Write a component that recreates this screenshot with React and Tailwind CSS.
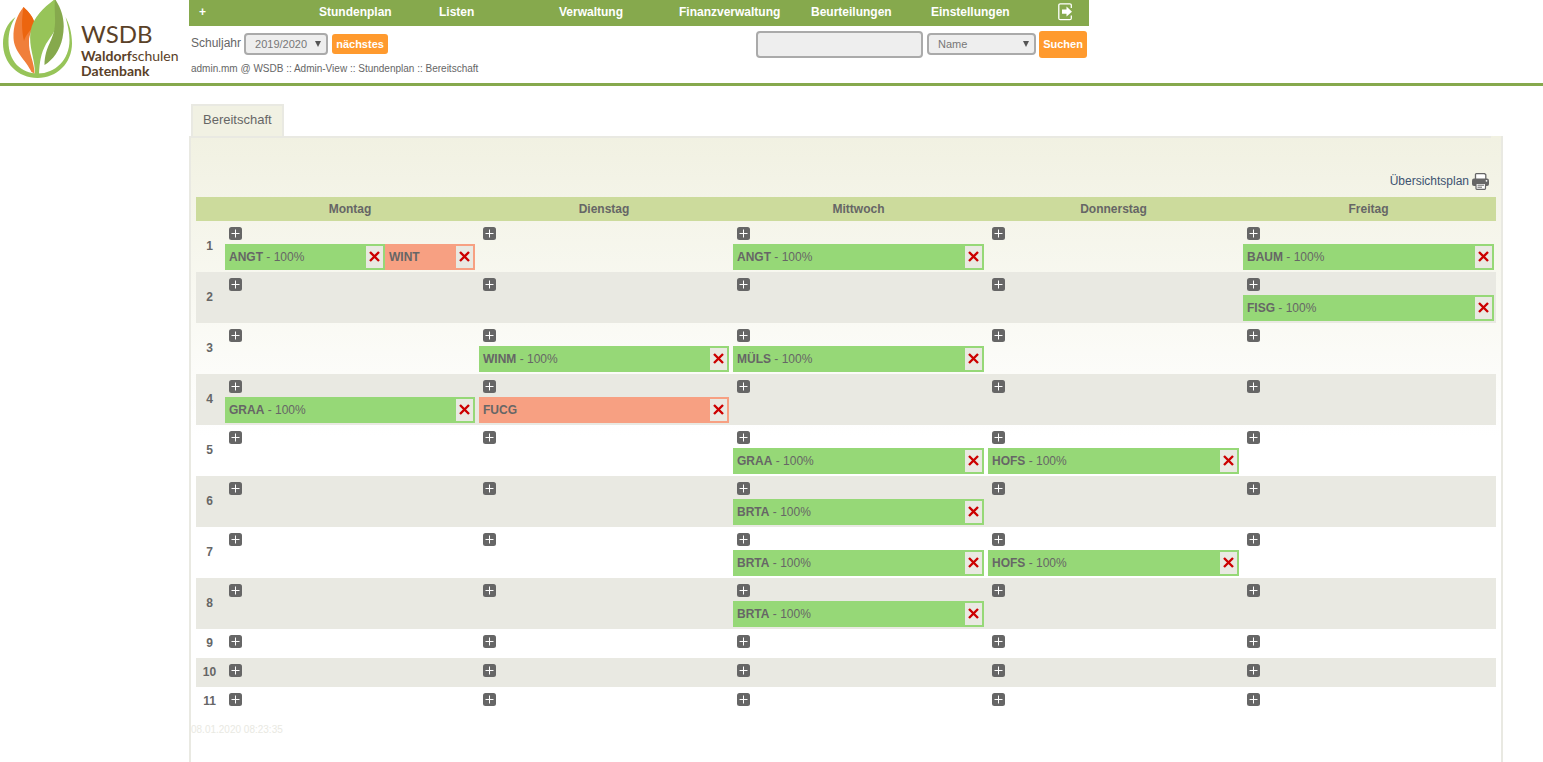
import { useState } from 'react';
import clsx from 'clsx';

const NAV_ITEMS = [
  { label: '+' },
  { label: 'Stundenplan' },
  { label: 'Listen' },
  { label: 'Verwaltung' },
  { label: 'Finanzverwaltung', wide: true },
  { label: 'Beurteilungen' },
  { label: 'Einstellungen' },
];

const DAYS = ['Montag', 'Dienstag', 'Mittwoch', 'Donnerstag', 'Freitag'];
const LESSONS = [1, 2, 3, 4, 5, 6, 7, 8, 9, 10, 11];

const INITIAL_ENTRIES = [
  { id: 1, day: 0, lesson: 1, teacher: 'ANGT', percent: 100, width: 64 },
  { id: 2, day: 0, lesson: 1, teacher: 'WINT', width: 36 },
  { id: 3, day: 2, lesson: 1, teacher: 'ANGT', percent: 100 },
  { id: 4, day: 4, lesson: 1, teacher: 'BAUM', percent: 100 },
  { id: 5, day: 4, lesson: 2, teacher: 'FISG', percent: 100 },
  { id: 6, day: 1, lesson: 3, teacher: 'WINM', percent: 100 },
  { id: 7, day: 2, lesson: 3, teacher: 'MÜLS', percent: 100 },
  { id: 8, day: 0, lesson: 4, teacher: 'GRAA', percent: 100 },
  { id: 9, day: 1, lesson: 4, teacher: 'FUCG' },
  { id: 10, day: 2, lesson: 5, teacher: 'GRAA', percent: 100 },
  { id: 11, day: 3, lesson: 5, teacher: 'HOFS', percent: 100 },
  { id: 12, day: 2, lesson: 6, teacher: 'BRTA', percent: 100 },
  { id: 13, day: 2, lesson: 7, teacher: 'BRTA', percent: 100 },
  { id: 14, day: 3, lesson: 7, teacher: 'HOFS', percent: 100 },
  { id: 15, day: 2, lesson: 8, teacher: 'BRTA', percent: 100 },
];

const Logo = () => (
  <a href="#" aria-label="WSDB" className="flex shrink-0 w-[189px] h-[83px] text-[#5a4128]">
    <svg viewBox="0 0 76 83" className="w-[76px] h-[83px] shrink-0">
      {/* Ring */}
      <path
        d="M15.500 17C7 23 3 33 3 43.500 3 63 18 78 37.500 78S72 63 72 43.500C72 33 69 23 65.500 17 67.500 24 69.500 32 69.500 40 69.500 60 55 73.500 38 73.500S8.500 61 8.500 42C8.500 32 11 24 15.500 17z"
        fill="#97c459"
      />
      {/* Orange leaf */}
      <path d="M23.500 7C17 15 13 26 13.500 38 14 52 26 60 31.500 72L34.500 73.500C34.500 62 28.500 54 29 41 29 35 32 30 35 24 33 17 29 12 23.500 7z" fill="#f07f3a" />
      <path d="M23.500 7C21.500 20 21.500 30 24 41 26 34 31 30 35 24 33 17 29 12 23.500 7z" fill="#ec650f" />
      {/* Green leaf */}
      <path d="M55 -1C45 7 33 16 30.500 32 28.500 48 35 58 35 74.500H39C39.500 62 41 53 46 44 51 36 56 31 56 24 56 16 57 8 55 -1z" fill="#97c459" />
      <path d="M55 -1C54 8 55.500 16 55 24 54 41 45 45 44.500 65 53 60 60 50 62.500 38 65.500 23 63 11 55 -1z" fill="#86a94d" />
    </svg>
    <span className="flex flex-col pl-[5px] pt-[19px] whitespace-nowrap font-['Lato',sans-serif]">
      <span className="text-[24px] leading-[29px]">WSDB</span>
      <span className="text-[14px] leading-[15px]">
        <b>Waldorf</b>schulen
      </span>
      <b className="text-[14px] leading-[15px]">Datenbank</b>
    </span>
  </a>
);

const LogoutIcon = () => (
  <svg viewBox="0 0 15 18" className="w-[15px] h-[18px]" fill="none" stroke="#fff">
    <path d="M13.300 5V2.300Q13.300 .8 11.800 .8H2.300Q.8 .8 .8 2.300V15.200Q.8 16.700 2.300 16.700H11.800Q13.300 16.700 13.300 15.200V12.500" strokeWidth="1.300" />
    <path d="M4 6.500h4.500V3.500L14 8.700 8.500 13.500V10.700H4z" fill="#fff" stroke="none" />
  </svg>
);

const PrinterIcon = () => (
  <svg viewBox="0 0 17 17" className="w-[17px] h-[17px]">
    <path d="M3.500 6V1.500Q3.500 .7 4.300 .7H12.700L13.800 1.800V6" fill="#fff" stroke="#666" strokeWidth="1.300" />
    <path d="M2 5.500h13q2 0 2 2V11q0 2-2 2H2q-2 0-2-2V7.500q0-2 2-2z" fill="#666" />
    <circle cx="14.500" cy="7.800" r=".9" fill="#fff" />
    <path d="M4 10.500h9.500v5q0 .8-.8.8H4.800q-.8 0-.8-.8z" fill="#fff" stroke="#666" strokeWidth="1.200" />
    <path d="M5.500 12.200h6.500M5.500 14.200h4.500" stroke="#666" strokeWidth="1" />
  </svg>
);

const PlusIcon = () => (
  <svg viewBox="0 0 13 13" className="w-[13px] h-[13px]">
    <rect width="13" height="13" rx="2.500" fill="#666" />
    <path d="M6.500 2.500v8M2.500 6.500h8" stroke="#fff" strokeWidth="1" />
  </svg>
);

const DeleteIcon = () => (
  <svg viewBox="0 0 11 11" className="w-[11px] h-[11px]">
    <path d="M1 1l9 9M10 1l-9 9" stroke="#c00" strokeWidth="2.400" />
  </svg>
);

const Select = ({ id, label, options, className }) => (
  <span className={clsx('relative inline-flex', className)}>
    <select
      id={id}
      aria-label={label}
      className="appearance-none w-full h-[22px] pl-[9px] pr-3 text-[11px] text-[#777] bg-[#eee] border-2 border-[#aaa] rounded-[4px]"
    >
      {options.map((o) => (
        <option key={o}>{o}</option>
      ))}
    </select>
    <svg viewBox="0 0 6 6" className="absolute right-[7px] top-2 w-[6px] h-[6px] pointer-events-none">
      <path d="M0 0h6L3 6z" fill="#555" />
    </svg>
  </span>
);

const Entry = ({ entry, onDelete }) => (
  <div
    className={clsx(
      'flex items-center justify-between h-[26px] pl-1 pr-0.5',
      entry.percent ? 'bg-[#96d877]' : 'bg-[#f7a082]'
    )}
    style={{ width: `${entry.width || 100}%` }}
  >
    <span>
      <b>{entry.teacher}</b>
      {entry.percent && ` - ${entry.percent}%`}
    </span>
    <button
      type="button"
      aria-label={`${entry.teacher} löschen`}
      onClick={() => onDelete(entry.id)}
      className="flex items-center justify-center w-[17px] h-[22px] pb-px bg-[#e9e9e2]"
    >
      <DeleteIcon />
    </button>
  </div>
);

export default function App() {
  const [entries, setEntries] = useState(INITIAL_ENTRIES);

  const handleDelete = (id) => setEntries(entries.filter((e) => e.id !== id));

  return (
    <div className="min-h-screen flex flex-col bg-white text-[12px] text-[#666] font-['Liberation_Sans',Arial,sans-serif]">
      <header className="flex border-b-3 border-[#86a94d]">
        <Logo />
        <div className="w-full max-w-[900px]">
          <nav className="flex h-[26px] bg-[#86a94d] text-white font-bold leading-6">
            {NAV_ITEMS.map((item) => (
              <a key={item.label} href="#" className={clsx('pl-[10px]', item.wide ? 'w-[132px]' : 'w-[120px]')}>
                {item.label}
              </a>
            ))}
            <a href="#" aria-label="Abmelden" className="ml-auto mr-4 pt-[3px]">
              <LogoutIcon />
            </a>
          </nav>

          <div className="flex items-center justify-between h-9 px-0.5">
            <form className="flex items-center">
              <label htmlFor="year" className="mr-[3px] pb-0.5">Schuljahr</label>
              <Select id="year" options={['2019/2020']} className="w-[84px]" />
              <button type="button" className="ml-1 w-[56px] h-5 bg-[#ff9a2e] rounded-[3px] text-white text-[11px] font-bold">
                nächstes
              </button>
            </form>
            <form className="flex items-center" onSubmit={(e) => e.preventDefault()}>
              <input
                type="text"
                aria-label="Suchbegriff"
                className="w-[167px] h-[27px] px-2 bg-[#eee] border-2 border-[#aaa] rounded-[4px]"
              />
              <Select id="field" label="Suchfeld" options={['Name']} className="ml-1 w-[109px]" />
              <button type="submit" className="ml-[3px] w-12 h-[27px] bg-[#ff9a2e] rounded-[3px] text-white text-[11px] font-bold">
                Suchen
              </button>
            </form>
          </div>

          <p className="px-0.5 text-[10px] leading-[14px]">
            admin.mm @ WSDB :: Admin-View :: Stundenplan :: Bereitschaft
          </p>
        </div>
      </header>

      <main className="flex-1 flex flex-col ml-[189px] mr-10 pt-[18px]">
        <div className="flex pl-0.5">
          <a
            href="#"
            className="h-8 px-[10px] text-[13px] leading-7 bg-[#f1f1e3] border-2 border-b-0 border-[#e9e9e2]"
          >
            Bereitschaft
          </a>
        </div>

        <section className="flex-1 border-x-2 border-[#e9e9e2] bg-linear-to-b from-[#f1f1e2] to-white to-[300px]">
          <div className="h-0.5 mr-[10px] bg-[#e9e9e2]" />
          <div className="flex justify-end pt-[35px] pr-3 pb-[7px]">
            <a href="#" className="flex gap-[3px] text-[#3d5270] leading-[17px]">
              Übersichtsplan
              <PrinterIcon />
            </a>
          </div>

          <div className="px-[5px]">
            <table className="w-full table-fixed border-collapse">
              <thead>
                <tr className="h-6 bg-[#ccdb9c]">
                  <th className="w-[27px]" />
                  {DAYS.map((day, i) => (
                    <th key={day} className={clsx('font-bold', i < 2 && 'w-[19.54%]')}>{day}</th>
                  ))}
                </tr>
              </thead>
              <tbody>
                {LESSONS.map((lesson) => (
                  <tr key={lesson} className="h-[29px] even:bg-[#e9e9e2]">
                    <th className="pb-0.5 align-middle">{lesson}</th>
                    {DAYS.map((day, i) => (
                      <td key={day} className="p-0.5 align-top">
                        <div className="h-[21px] pt-1 pl-1">
                          <button type="button" aria-label={`${day}, ${lesson}. Stunde hinzufügen`} className="block">
                            <PlusIcon />
                          </button>
                        </div>
                        <div className="flex">
                          {entries
                            .filter((e) => e.day === i && e.lesson === lesson)
                            .map((e) => (
                              <Entry key={e.id} entry={e} onDelete={handleDelete} />
                            ))}
                        </div>
                      </td>
                    ))}
                  </tr>
                ))}
              </tbody>
            </table>
          </div>

          <p className="pt-[7px] text-[10px] leading-[14px] text-[#e9e9e2]">08.01.2020 08:23:35</p>
        </section>
      </main>
    </div>
  );
}
